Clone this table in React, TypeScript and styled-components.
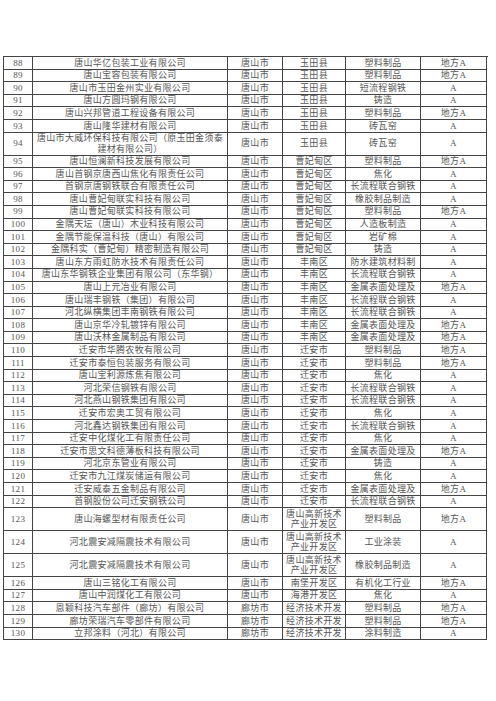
import React from "react";
import styled, { createGlobalStyle } from "styled-components";

const GlobalStyle = createGlobalStyle`
    html, body {
        margin: 0;
        padding: 0;
        background: #ffffff;
    }
`;

type Row = [string, string, string, string, string, string];

const rows: Row[] = [
    ["88", "唐山华亿包装工业有限公司", "唐山市", "玉田县", "塑料制品", "地方A"],
    ["89", "唐山宝容包装有限公司", "唐山市", "玉田县", "塑料制品", "地方A"],
    ["90", "唐山市玉田金州实业有限公司", "唐山市", "玉田县", "短流程钢铁", "A"],
    ["91", "唐山方圆玛钢有限公司", "唐山市", "玉田县", "铸造", "A"],
    ["92", "唐山兴邦管道工程设备有限公司", "唐山市", "玉田县", "塑料制品", "地方A"],
    ["93", "唐山隆华建材有限公司", "唐山市", "玉田县", "砖瓦窑", "A"],
    ["94", "唐山市大威环保科技有限公司（原玉田金须泰\n建材有限公司）", "唐山市", "玉田县", "砖瓦窑", "A"],
    ["95", "唐山恒澜新科技发展有限公司", "唐山市", "曹妃甸区", "塑料制品", "地方A"],
    ["96", "唐山首钢京唐西山焦化有限责任公司", "唐山市", "曹妃甸区", "焦化", "A"],
    ["97", "首钢京唐钢铁联合有限责任公司", "唐山市", "曹妃甸区", "长流程联合钢铁", "A"],
    ["98", "唐山曹妃甸联实科技有限公司", "唐山市", "曹妃甸区", "橡胶制品制造", "A"],
    ["99", "唐山曹妃甸联实科技有限公司", "唐山市", "曹妃甸区", "塑料制品", "地方A"],
    ["100", "金隅天坛（唐山）木业科技有限公司", "唐山市", "曹妃甸区", "人造板制造", "A"],
    ["101", "金隅节能保温科技（唐山）有限公司", "唐山市", "曹妃甸区", "岩矿棉", "A"],
    ["102", "金隅科实（曹妃甸）精密制造有限公司", "唐山市", "曹妃甸区", "铸造", "A"],
    ["103", "唐山东方雨虹防水技术有限责任公司", "唐山市", "丰南区", "防水建筑材料制", "A"],
    ["104", "唐山东华钢铁企业集团有限公司（东华钢）", "唐山市", "丰南区", "长流程联合钢铁", "A"],
    ["105", "唐山上元冶业有限公司", "唐山市", "丰南区", "金属表面处理及", "地方A"],
    ["106", "唐山瑞丰钢铁（集团）有限公司", "唐山市", "丰南区", "长流程联合钢铁", "A"],
    ["107", "河北纵横集团丰南钢铁有限公司", "唐山市", "丰南区", "长流程联合钢铁", "A"],
    ["108", "唐山京华冷轧镀锌有限公司", "唐山市", "丰南区", "金属表面处理及", "地方A"],
    ["109", "唐山沃林金属制品有限公司", "唐山市", "丰南区", "金属表面处理及", "地方A"],
    ["110", "迁安市华腾农牧有限公司", "唐山市", "迁安市", "塑料制品", "地方A"],
    ["111", "迁安市泰恒包装服务有限公司", "唐山市", "迁安市", "塑料制品", "地方A"],
    ["112", "唐山宝利源炼焦有限公司", "唐山市", "迁安市", "焦化", "A"],
    ["113", "河北荣信钢铁有限公司", "唐山市", "迁安市", "长流程联合钢铁", "A"],
    ["114", "河北燕山钢铁集团有限公司", "唐山市", "迁安市", "长流程联合钢铁", "A"],
    ["115", "迁安市宏奥工贸有限公司", "唐山市", "迁安市", "焦化", "A"],
    ["116", "河北鑫达钢铁集团有限公司", "唐山市", "迁安市", "长流程联合钢铁", "A"],
    ["117", "迁安中化煤化工有限责任公司", "唐山市", "迁安市", "焦化", "A"],
    ["118", "迁安市思文科德薄板科技有限公司", "唐山市", "迁安市", "金属表面处理及", "地方A"],
    ["119", "河北京东管业有限公司", "唐山市", "迁安市", "铸造", "A"],
    ["120", "迁安市九江煤炭储运有限公司", "唐山市", "迁安市", "焦化", "A"],
    ["121", "迁安威泰五金制品有限公司", "唐山市", "迁安市", "金属表面处理及", "地方A"],
    ["122", "首钢股份公司迁安钢铁公司", "唐山市", "迁安市", "长流程联合钢铁", "A"],
    ["123", "唐山海螺型材有限责任公司", "唐山市", "唐山高新技术\n产业开发区", "塑料制品", "地方A"],
    ["124", "河北震安减隔震技术有限公司", "唐山市", "唐山高新技术\n产业开发区", "工业涂装", "A"],
    ["125", "河北震安减隔震技术有限公司", "唐山市", "唐山高新技术\n产业开发区", "橡胶制品制造", "A"],
    ["126", "唐山三铭化工有限公司", "唐山市", "南堡开发区", "有机化工行业", "地方A"],
    ["127", "唐山中润煤化工有限公司", "唐山市", "海港开发区", "焦化", "A"],
    ["128", "恩颖科技汽车部件（廊坊）有限公司", "廊坊市", "经济技术开发", "塑料制品", "地方A"],
    ["129", "廊坊荣瑞汽车零部件有限公司", "廊坊市", "经济技术开发", "塑料制品", "地方A"],
    ["130", "立邦涂料（河北）有限公司", "廊坊市", "经济技术开发", "涂料制造", "A"],
];

const Page = styled.div`
    padding: 56px 0 0 3px;
    height: 701px;
    box-sizing: border-box;
    overflow: hidden;
`;

const Table = styled.div`
    width: 484px;
    border-top: 1px solid #444;
    border-left: 1px solid #444;
    font-family: "Liberation Serif", "Noto Sans CJK SC", serif;
    font-size: 9px;
    color: #555;
`;

const TableRow = styled.div<{ $tall: boolean }>`
    display: grid;
    grid-template-columns: 29px 195px 55px 63px 75px 66px;
    height: ${p => (p.$tall ? 23 : 12.6)}px;
`;

const Cell = styled.div`
    box-sizing: border-box;
    border-right: 1px solid #444;
    border-bottom: 1px solid #444;
    display: flex;
    align-items: center;
    justify-content: center;
    text-align: center;
    white-space: pre;
    line-height: 10.5px;
    letter-spacing: 0.3px;
    overflow: hidden;
`;

export default function App() {
    return (
        <Page>
            <GlobalStyle />
            <Table>
                {rows.map(r => {
                    const tall = r.some(t => t.includes("\n"));
                    return (
                        <TableRow key={r[0]} $tall={tall}>
                            {r.map((t, i) => (
                                <Cell key={i}>{t}</Cell>
                            ))}
                        </TableRow>
                    );
                })}
            </Table>
        </Page>
    );
}
